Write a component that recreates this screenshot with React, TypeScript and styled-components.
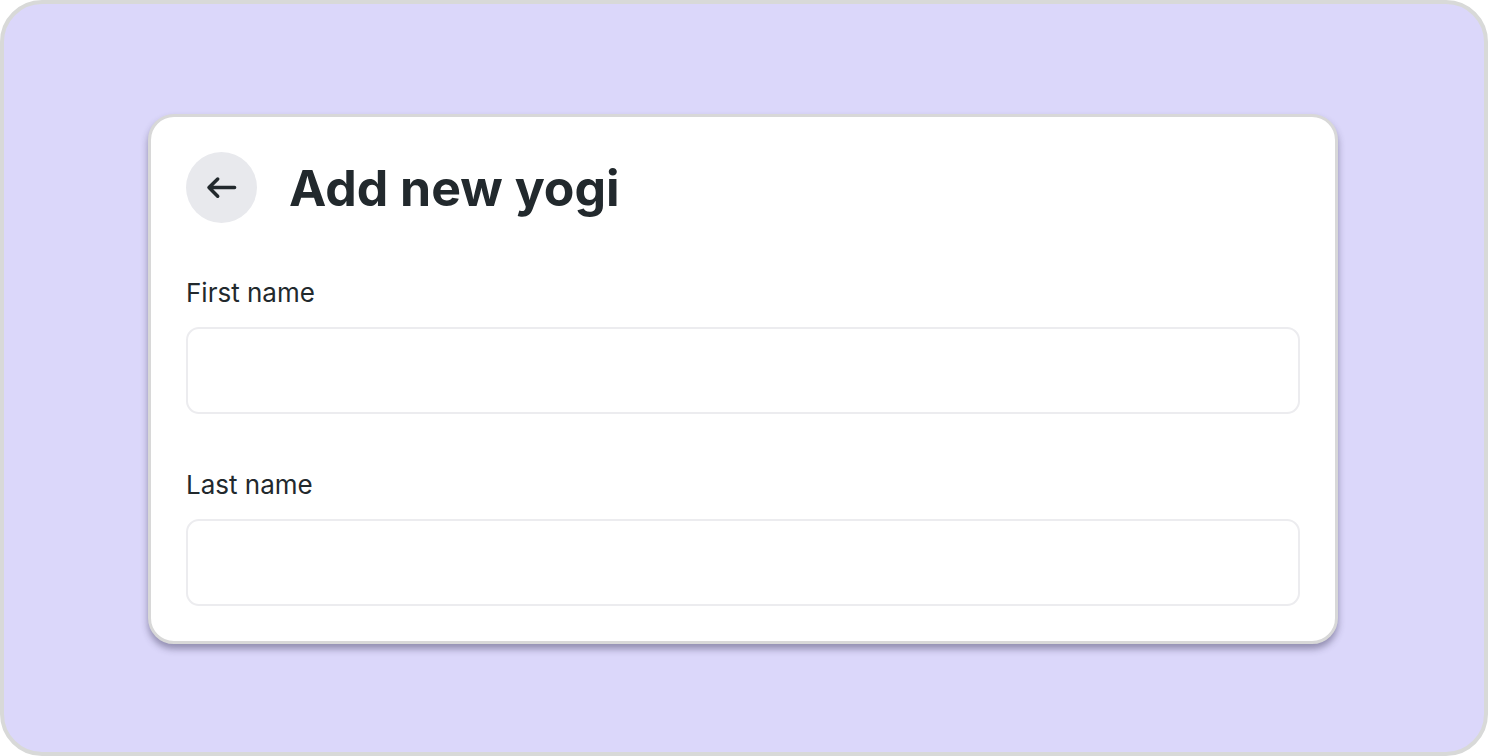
import React from "react";
import styled, { createGlobalStyle } from "styled-components";

const GlobalStyle = createGlobalStyle`
  *, *::before, *::after { box-sizing: border-box; }
  body {
    margin: 0;
    background: #ffffff;
    color: #22292d;
    font-family: Inter, "Liberation Sans", sans-serif;
  }
`;

const Frame = styled.main`
  min-height: 100vh;
  padding: 110px 146px 108px 144px;
  border: 4px solid #d8d9d8;
  border-radius: 42px;
  background: #dbd7fa;
`;

const Card = styled.form`
  padding: 35px;
  border: 3px solid #d8d8d8;
  border-radius: 26px;
  background: #ffffff;
  box-shadow: 0 5px 7px rgba(45, 40, 75, 0.42);
`;

const Header = styled.header`
  display: flex;
  align-items: center;
  gap: 32px;
  margin-bottom: 54px;
`;

const BackButton = styled.button`
  display: flex;
  flex: none;
  align-items: center;
  justify-content: center;
  width: 71px;
  height: 71px;
  padding: 0;
  border: 0;
  border-radius: 50%;
  background: #e8e9ed;
  color: inherit;
  cursor: pointer;
`;

const Title = styled.h1`
  margin: 0;
  font-size: 50px;
  font-weight: 700;
  line-height: 70px;
`;

const Fields = styled.div`
  display: flex;
  flex-direction: column;
  gap: 55px;
`;

const Field = styled.div`
  display: flex;
  flex-direction: column;
  gap: 18px;
`;

const Label = styled.label`
  font-size: 26px;
  font-weight: 400;
  line-height: 32px;
`;

const TextInput = styled.input`
  width: 100%;
  height: 87px;
  padding: 0 24px;
  border: 2px solid #ececef;
  border-radius: 13px;
  background: #ffffff;
  color: inherit;
  font: inherit;
  font-size: 26px;
`;

function ArrowLeft() {
  return (
    <svg width="31" height="23" viewBox="0 0 31 23" fill="none" aria-hidden="true">
      <path
        d="M28.6 11.6H3M11.7 3L3 11.6L11.7 20.2"
        stroke="currentColor"
        strokeWidth="3.5"
        strokeLinecap="round"
        strokeLinejoin="round"
      />
    </svg>
  );
}

function TextField({ id, label }: { id: string; label: string }) {
  return (
    <Field>
      <Label htmlFor={id}>{label}</Label>
      <TextInput id={id} name={id} type="text" />
    </Field>
  );
}

export default function App() {
  return (
    <>
      <GlobalStyle />
      <Frame>
        <Card>
          <Header>
            <BackButton type="button" aria-label="Back">
              <ArrowLeft />
            </BackButton>
            <Title>Add new yogi</Title>
          </Header>
          <Fields>
            <TextField id="firstName" label="First name" />
            <TextField id="lastName" label="Last name" />
          </Fields>
        </Card>
      </Frame>
    </>
  );
}
